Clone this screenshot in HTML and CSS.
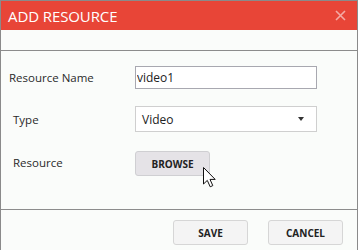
FILE: index.html
```html
<!DOCTYPE html>
<html lang="en">
<head>
    <meta charset="UTF-8" />
    <title>Add Resource</title>
    <link rel="stylesheet" href="styles.css">
</head>
<body>
<div class="dialog">
    <div class="dialog-header">
        <span class="dialog-title">ADD RESOURCE</span>
        <svg class="dialog-close" width="11" height="11" viewBox="0 0 11 11">
            <path d="M1 1 L10 10 M10 1 L1 10" stroke="#fff" stroke-width="1.6" fill="none"/>
        </svg>
    </div>
    <div class="dialog-spacer"></div>

    <div class="dialog-body">
        <div class="form-row">
            <label class="form-label">Resource Name</label>
            <input class="text-input" type="text" value="video1">
        </div>
        <div class="form-row">
            <label class="form-label indent">Type</label>
            <div class="select-box">
                <span>Video</span>
                <span class="select-arrow"></span>
            </div>
        </div>
        <div class="form-row">
            <label class="form-label indent">Resource</label>
            <div class="browse-wrap">
                <button class="btn btn-browse">BROWSE</button>
                <svg class="cursor" width="16" height="23" viewBox="0 0 16 23">
                    <path d="M1.5 1.5 L1.5 18 L5.3 14.4 L8.2 20.8 L10.8 19.6 L8 13.4 L13.2 13.4 Z" fill="#fff" stroke="#111" stroke-width="1" stroke-linejoin="round"/>
                </svg>
            </div>
        </div>
    </div>

    <div class="dialog-footer">
        <button class="btn">SAVE</button>
        <button class="btn">CANCEL</button>
    </div>
</div>
</body>
</html>
```

FILE: styles.css
```css
body {
    margin: 0;
    font-family: "Open Sans", "Noto Sans", sans-serif;
    background: #fafbfa;
}

.dialog {
    width: 358px;
    height: 250px;
    box-sizing: border-box;
    border: 1px solid #8a8a8a;
    border-bottom: none;
    background: #fafcfa;
    display: flex;
    flex-direction: column;
}

.dialog-header {
    height: 29px;
    background: #e84537;
    display: flex;
    align-items: center;
    justify-content: space-between;
    padding: 0 11px 0 7px;
}

.dialog-title {
    color: #fff;
    font-size: 15px;
    letter-spacing: -0.1px;
    font-weight: 400;
}

.dialog-close {
    opacity: 0.55;
}

.dialog-spacer {
    height: 20px;
    border-bottom: 1px solid #8c8c8c;
}

.dialog-body {
    flex: 1;
    padding-top: 15px;
    display: flex;
    flex-direction: column;
    gap: 17px;
}

.form-row {
    display: grid;
    grid-template-columns: 134px 182px;
    align-items: center;
}

.form-label {
    font-size: 11.5px;
    color: #2a2a2a;
    padding-left: 8px;
}

.form-label.indent {
    padding-left: 12px;
}

.text-input {
    height: 23px;
    box-sizing: border-box;
    border: 1px solid #a8a8b0;
    background: #fff;
    font-family: inherit;
    font-size: 12px;
    color: #222;
    padding: 0 1px;
    margin: 0;
    outline: none;
}

.select-box {
    height: 26px;
    box-sizing: border-box;
    border: 1px solid #cfcfcf;
    background: #fff;
    display: flex;
    align-items: center;
    justify-content: space-between;
    padding: 0 12px 0 6px;
    font-size: 12px;
    color: #222;
}

.select-arrow {
    width: 0;
    height: 0;
    border-left: 3.5px solid transparent;
    border-right: 3.5px solid transparent;
    border-top: 4px solid #333;
}

.browse-wrap {
    position: relative;
    display: flex;
}

.btn {
    width: 75px;
    height: 25px;
    box-sizing: border-box;
    border: 1px solid #d6d6d6;
    border-radius: 3px;
    background: #f4f4f4;
    font-family: inherit;
    font-size: 10px;
    font-weight: 700;
    color: #222;
    padding: 0;
    margin: 0;
}

.btn-browse {
    background: #e5e3e7;
    border-color: #cfcfd2;
    margin-top: 2px;
}

.cursor {
    position: absolute;
    left: 67px;
    top: 17px;
}

.dialog-footer {
    border-top: 1px solid #8c8c8c;
    height: 41px;
    display: flex;
    justify-content: flex-end;
    align-items: flex-start;
    gap: 20px;
    padding: 10px 14px 0 0;
    box-sizing: border-box;
}
```
